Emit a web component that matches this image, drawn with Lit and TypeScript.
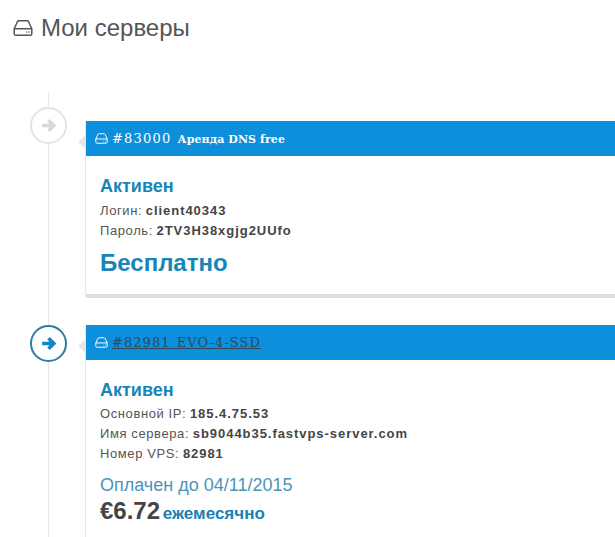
import { LitElement, html, css, svg } from 'lit';
import { customElement } from 'lit/decorators.js';

const driveIcon = svg`<path d="M1.2 9.2 4.4 2.2c.3-.6.9-1 1.6-1h8c.7 0 1.3.4 1.6 1l3.2 7v5c0 1-.8 1.6-1.6 1.6H2.8c-.8 0-1.6-.6-1.6-1.6zM1.2 9.2h17.6M13.2 12.5h1M15.6 12.5h1" fill="none" stroke="currentColor" stroke-width="1.5" stroke-linejoin="round"/>`;

interface Row {
  label: string;
  value: string;
}

interface Server {
  number: string;
  name: string;
  active: boolean;
  rows: Row[];
}

const servers: Server[] = [
  {
    number: '#83000',
    name: 'Аренда DNS free',
    active: false,
    rows: [
      { label: 'Логин:', value: 'client40343' },
      { label: 'Пароль:', value: '2TV3H38xgjg2UUfo' },
    ],
  },
  {
    number: '#82981',
    name: 'EVO-4-SSD',
    active: true,
    rows: [
      { label: 'Основной IP:', value: '185.4.75.53' },
      { label: 'Имя сервера:', value: 'sb9044b35.fastvps-server.com' },
      { label: 'Номер VPS:', value: '82981' },
    ],
  },
];

@customElement('app-root')
export class AppRoot extends LitElement {
  static styles = css`
    :host {
      display: block;
      height: 537px;
      overflow: hidden;
      background: #fff;
      font-family: 'Liberation Sans', Arial, sans-serif;
      color: #444;
    }

    .page-title {
      display: flex;
      align-items: center;
      gap: 8px;
      margin: 0;
      padding: 15px 0 0 13px;
      height: 26px;
      font-size: 24px;
      font-weight: 400;
      line-height: 26px;
      color: #555;
    }

    .page-title svg {
      width: 20px;
      height: 18px;
    }

    .timeline {
      position: relative;
      margin-top: 51px;
      padding: 29px 0 0 30px;
    }

    .timeline::before {
      content: '';
      position: absolute;
      left: 48px;
      top: 0;
      bottom: 0;
      width: 1px;
      background: #e8e8e8;
    }

    .item {
      position: relative;
      display: flex;
      align-items: flex-start;
      margin-bottom: 27px;
    }

    .dot {
      box-sizing: border-box;
      position: relative;
      flex: none;
      display: flex;
      align-items: center;
      justify-content: center;
      width: 37px;
      height: 37px;
      margin: -14px 18px 0 0;
      border: 2px solid #e4e4e4;
      border-radius: 50%;
      background: #fff;
      color: #d8d8d8;
    }

    .dot svg {
      width: 17px;
      height: 17px;
    }

    .item.active .dot {
      margin-top: 0;
      border-color: #2b7da1;
      color: #1386c6;
    }

    .card {
      position: relative;
      flex: 1;
      min-width: 0;
      background: #fff;
      border-left: 1px solid #e6e6e6;
      border-bottom: 4px solid #dcdcdc;
      border-bottom-left-radius: 4px;
      margin-right: -6px;
    }

    .card::before {
      content: '';
      position: absolute;
      left: -6px;
      top: 17px;
      width: 8px;
      height: 8px;
      background: #e4e4e4;
      transform: rotate(45deg);
    }

    .card-head {
      position: relative;
      display: flex;
      align-items: center;
      gap: 4px;
      height: 35px;
      padding-left: 9px;
      background: #0d8fdc;
      color: #fff;
      font-family: 'DejaVu Serif', serif;
      font-size: 13px;
    }

    .card-head svg {
      width: 13px;
      height: 11px;
    }

    .card-title {
      word-spacing: 2px;
    }

    .number {
      letter-spacing: 1.2px;
    }

    .name {
      font-size: 11px;
      font-weight: 700;
      letter-spacing: 0.1px;
      word-spacing: 0;
    }

    .item.active .card-title {
      color: #2a4a5e;
      text-decoration: underline;
    }

    .item.active .number,
    .item.active .name {
      font-size: 13px;
      font-weight: 400;
      letter-spacing: 1.05px;
    }

    .card-body {
      padding: 19px 14px 16px;
      font-size: 13px;
      line-height: 20px;
    }

    .status {
      margin-bottom: 4px;
      font-size: 18px;
      font-weight: 700;
      line-height: 22px;
      color: #1686b8;
    }

    .item.active .status {
      margin-bottom: 3px;
    }

    .row span {
      color: #555;
      letter-spacing: 0.6px;
    }

    .row b {
      color: #444;
      letter-spacing: 0.95px;
    }

    .free {
      margin-top: 7px;
      font-size: 24px;
      font-weight: 700;
      line-height: 30px;
      color: #1686b8;
    }

    .paid {
      margin-top: 10px;
      font-size: 18px;
      line-height: 22px;
      color: #4c94b8;
    }

    .price {
      font-size: 17px;
      font-weight: 700;
      line-height: 30px;
      word-spacing: -2px;
      color: #1a7fb0;
    }

    .price b {
      font-size: 24px;
      color: #444;
    }
  `;

  private renderArrow() {
    return html`<svg viewBox="0 0 16 16">
      <path d="M2 8h10M8 3l5 5-5 5" fill="none" stroke="currentColor" stroke-width="3.4" />
    </svg>`;
  }

  private renderServer(server: Server, index: number) {
    return html`
      <div class="item ${server.active ? 'active' : ''}">
        <div class="dot">${this.renderArrow()}</div>
        <div class="card">
          <div class="card-head">
            <svg viewBox="0 0 20 17">${driveIcon}</svg>
            <span class="card-title"><span class="number">${server.number}</span> <span class="name">${server.name}</span></span>
          </div>
          <div class="card-body">
            <div class="status">Активен</div>
            ${server.rows.map(
              (row) => html`<div class="row"><span>${row.label}</span> <b>${row.value}</b></div>`
            )}
            ${index === 0
              ? html`<div class="free">Бесплатно</div>`
              : html`
                  <div class="paid">Оплачен до 04/11/2015</div>
                  <div class="price"><b>€6.72</b> ежемесячно</div>
                `}
          </div>
        </div>
      </div>
    `;
  }

  render() {
    return html`
      <h1 class="page-title">
        <svg viewBox="0 0 20 17">${driveIcon}</svg>
        Мои серверы
      </h1>
      <div class="timeline">${servers.map((s, i) => this.renderServer(s, i))}</div>
    `;
  }
}

declare global {
  interface HTMLElementTagNameMap {
    'app-root': AppRoot;
  }
}
